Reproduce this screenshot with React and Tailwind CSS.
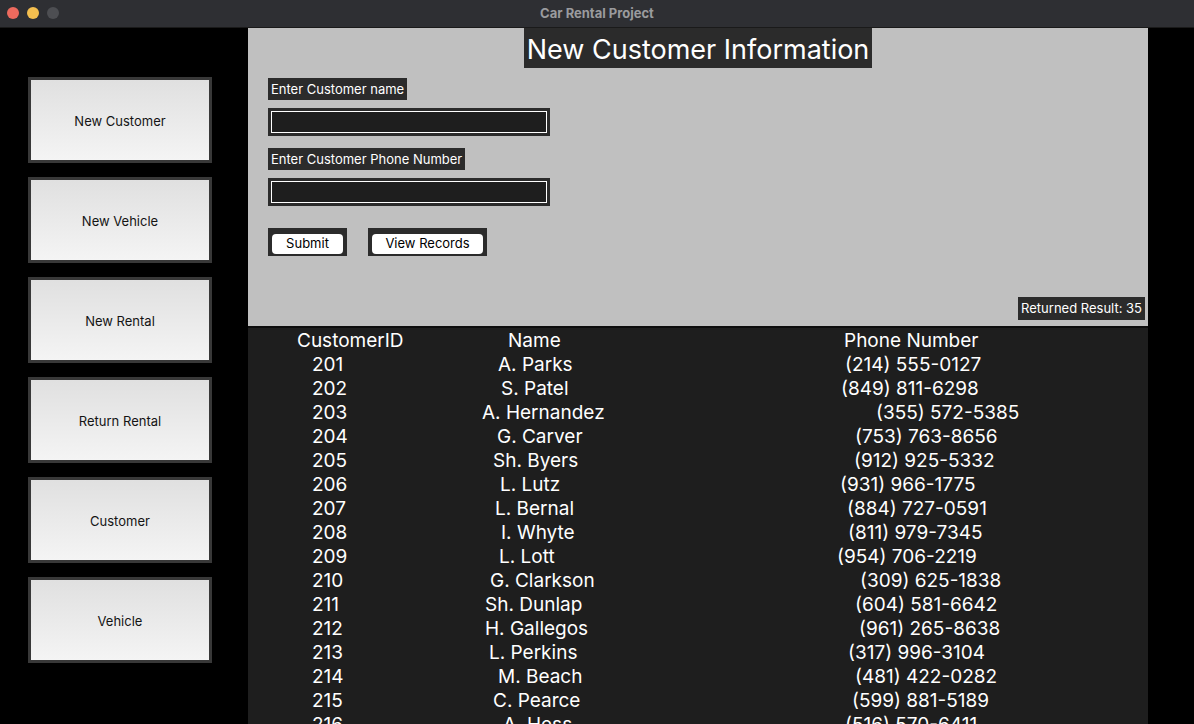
import React from "react";

const rows = [
  { id: "201", name: "A. Parks", nx: 498, phone: "(214) 555-0127", px: 845 },
  { id: "202", name: "S. Patel", nx: 501, phone: "(849) 811-6298", px: 841 },
  { id: "203", name: "A. Hernandez", nx: 482, phone: "(355) 572-5385", px: 876 },
  { id: "204", name: "G. Carver", nx: 497, phone: "(753) 763-8656", px: 855 },
  { id: "205", name: "Sh. Byers", nx: 493, phone: "(912) 925-5332", px: 854 },
  { id: "206", name: "L. Lutz", nx: 500, phone: "(931) 966-1775", px: 840 },
  { id: "207", name: "L. Bernal", nx: 495, phone: "(884) 727-0591", px: 847 },
  { id: "208", name: "I. Whyte", nx: 501, phone: "(811) 979-7345", px: 848 },
  { id: "209", name: "L. Lott", nx: 499, phone: "(954) 706-2219", px: 837 },
  { id: "210", name: "G. Clarkson", nx: 490, phone: "(309) 625-1838", px: 860 },
  { id: "211", name: "Sh. Dunlap", nx: 485, phone: "(604) 581-6642", px: 855 },
  { id: "212", name: "H. Gallegos", nx: 485, phone: "(961) 265-8638", px: 859 },
  { id: "213", name: "L. Perkins", nx: 489, phone: "(317) 996-3104", px: 848 },
  { id: "214", name: "M. Beach", nx: 498, phone: "(481) 422-0282", px: 855 },
  { id: "215", name: "C. Pearce", nx: 493, phone: "(599) 881-5189", px: 852 },
  { id: "216", name: "A. Hess", nx: 503, phone: "(516) 570-6411", px: 845 },
];

const navItems = ["New Customer", "New Vehicle", "New Rental", "Return Rental", "Customer", "Vehicle"];

function NavButton({ label }) {
  return (
    <div className="w-[184px] h-[86px] bg-[#383838] p-[3px]">
      <div className="w-full h-full bg-gradient-to-b from-[#e0e0e0] to-[#f4f4f4] flex items-center justify-center pt-[4px] text-[13px] text-[#141414]">
        {label}
      </div>
    </div>
  );
}

function Field({ label }) {
  return (
    <>
      <div className="self-start h-[22px] bg-[#2b2b2b] px-[3px] pt-[1px] flex items-center text-[13px] text-white">{label}</div>
      <div className="mt-[8px] w-[282px] h-[28px] bg-[#2b2b2b] p-[3px]">
        <div className="w-full h-full bg-[#1e1e1e] border border-white" />
      </div>
    </>
  );
}

export default function App() {
  return (
    <div className="w-[1194px] h-[724px] bg-black overflow-hidden flex flex-col font-['Inter',sans-serif]">
      <div className="h-[28px] shrink-0 bg-[#2e2f33] border-b border-[#1a1a1a] relative flex items-center justify-center">
        <div className="absolute left-[7px] top-[7px] flex gap-[8px]">
          <span className="w-[12px] h-[12px] rounded-full bg-[#ed6a5e]" />
          <span className="w-[12px] h-[12px] rounded-full bg-[#f4bf4f]" />
          <span className="w-[12px] h-[12px] rounded-full bg-[#4d4e52]" />
        </div>
        <span className="text-[13px] font-bold text-[#9a9b9e]">Car Rental Project</span>
      </div>
      <div className="flex flex-1 min-h-0">
        <div className="w-[248px] shrink-0 flex flex-col gap-[14px] pt-[49px] pl-[28px]">
          {navItems.map((n) => (
            <NavButton key={n} label={n} />
          ))}
        </div>
        <div className="w-[900px] flex flex-col">
          <div className="h-[298px] shrink-0 bg-[#c0c0c0] flex flex-col relative px-[20px]">
            <div className="self-center h-[40px] bg-[#2b2b2b] px-[3px] pt-[5px] flex items-center text-[27px] text-white">
              New Customer Information
            </div>
            <div className="mt-[10px] flex flex-col">
              <Field label="Enter Customer name" />
              <div className="h-[12px]" />
              <Field label="Enter Customer Phone Number" />
            </div>
            <div className="mt-[22px] flex gap-[21px]">
              <div className="w-[79px] h-[28px] bg-[#2b2b2b] px-[4px] pt-[6px] pb-[2px]">
                <div className="w-full h-full bg-white rounded-[4px] flex items-center justify-center text-[13px] text-black">Submit</div>
              </div>
              <div className="w-[119px] h-[28px] bg-[#2b2b2b] px-[4px] pt-[6px] pb-[2px]">
                <div className="w-full h-full bg-white rounded-[4px] flex items-center justify-center text-[13px] text-black">View Records</div>
              </div>
            </div>
            <div className="absolute right-[3px] bottom-[6px] h-[23px] bg-[#2b2b2b] px-[3px] pt-[1px] flex items-center text-[13px] text-white">
              Returned Result: 35
            </div>
          </div>
          <div className="h-[2px] shrink-0 bg-[#0d0d0d]" />
          <div className="flex-1 bg-[#1e1e1e] pt-[1px] text-white text-[19px] leading-[24px] overflow-hidden">
            <div className="relative h-[24px]">
              <span className="absolute left-[49px]">CustomerID</span>
              <span className="absolute left-[260px]">Name</span>
              <span className="absolute left-[596px]">Phone Number</span>
            </div>
            {rows.map((r) => (
              <div key={r.id} className="relative h-[24px] whitespace-nowrap">
                <span className="absolute left-[64px]">{r.id}</span>
                <span className="absolute" style={{ left: r.nx - 248 }}>{r.name}</span>
                <span className="absolute" style={{ left: r.px - 248 }}>{r.phone}</span>
              </div>
            ))}
          </div>
        </div>
      </div>
    </div>
  );
}
